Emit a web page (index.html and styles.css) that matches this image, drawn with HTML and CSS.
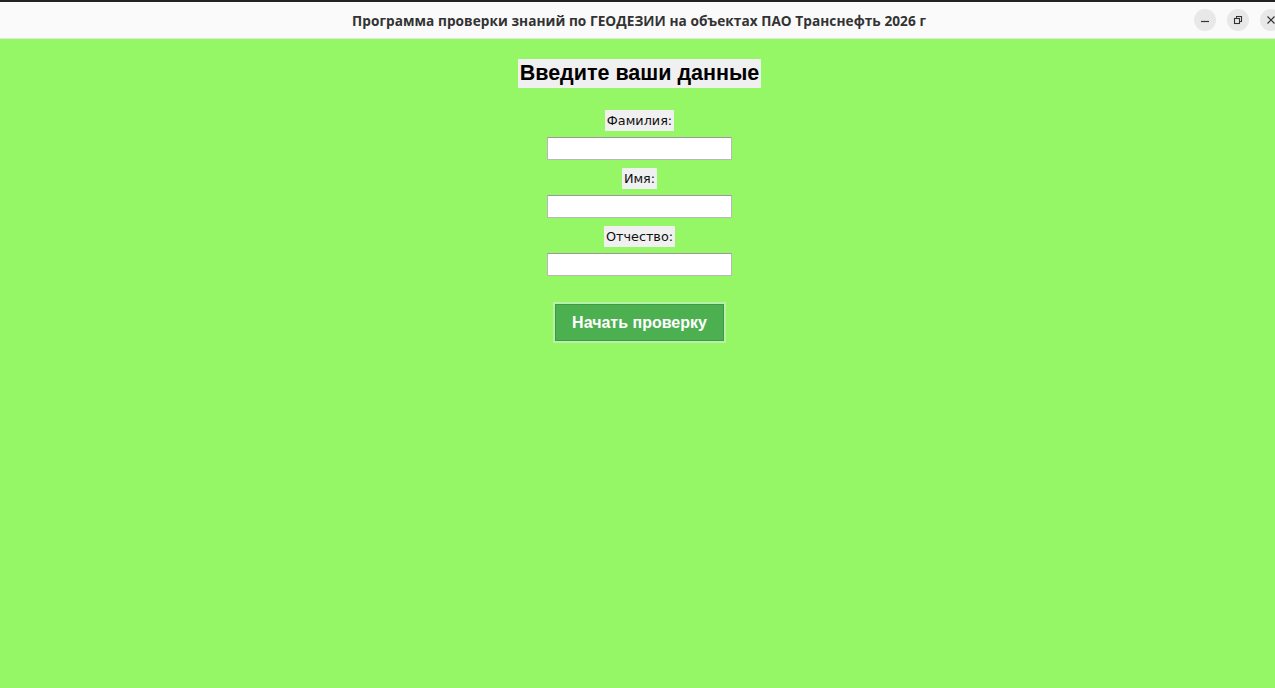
FILE: index.html
```html
<!DOCTYPE html>
<html lang="ru">
<head>
<meta charset="utf-8">
<title>Программа проверки знаний</title>
<link rel="stylesheet" href="styles.css">
</head>
<body>
<div class="window">
  <header class="titlebar">
    <div class="title">Программа проверки знаний по ГЕОДЕЗИИ на объектах ПАО Транснефть 2026 г</div>
    <div class="controls">
      <span class="ctl"><svg width="10" height="10" viewBox="0 0 10 10"><path d="M1 6.5h8" stroke="#333" stroke-width="1.2"/></svg></span>
      <span class="ctl"><svg width="10" height="10" viewBox="0 0 10 10"><rect x="1.5" y="3.5" width="5" height="5" fill="none" stroke="#333" stroke-width="1.1"/><path d="M3.5 3.5V1.5h5v5h-2" fill="none" stroke="#333" stroke-width="1.1"/></svg></span>
      <span class="ctl"><svg width="10" height="10" viewBox="0 0 10 10"><path d="M1.5 1.5l7 7M8.5 1.5l-7 7" stroke="#333" stroke-width="1.2"/></svg></span>
    </div>
  </header>
  <main class="content">
    <h1 class="heading">Введите ваши данные</h1>
    <div class="form">
      <label class="lbl">Фамилия:</label>
      <input class="entry" type="text">
      <label class="lbl">Имя:</label>
      <input class="entry" type="text">
      <label class="lbl">Отчество:</label>
      <input class="entry" type="text">
    </div>
    <div class="btn-wrap"><button class="btn">Начать проверку</button></div>
  </main>
</div>
</body>
</html>
```
FILE: styles.css
```css
html, body {
  margin: 0;
  padding: 0;
  height: 100%;
}
body {
  background: #95f766;
  font-family: "DejaVu Sans", sans-serif;
}
.window {
  display: flex;
  flex-direction: column;
  height: 100%;
  border-top: 2px solid #222;
  box-sizing: border-box;
}
.titlebar {
  height: 36px;
  background: #fafafa;
  border-bottom: 1px solid #e2e2e2;
  display: flex;
  align-items: center;
  justify-content: center;
  padding-left: 3px;
  position: relative;
  flex: none;
}
.title {
  font-family: "Open Sans", "Noto Sans", sans-serif;
  font-weight: 700;
  font-size: 13.65px;
  color: #333;
  letter-spacing: 0.05px;
}
.controls {
  position: absolute;
  right: -7px;
  top: 7px;
  display: flex;
  gap: 11px;
}
.ctl {
  width: 22px;
  height: 22px;
  border-radius: 50%;
  background: #e8e8e8;
  display: flex;
  align-items: center;
  justify-content: center;
}
.content {
  flex: 1;
  display: flex;
  flex-direction: column;
  align-items: center;
  padding-top: 20px;
  padding-left: 4px;
}
.heading {
  margin: 0;
  background: #f0f0f0;
  font-family: "Liberation Sans", Arial, sans-serif;
  font-weight: 700;
  font-size: 21.5px;
  line-height: 29px;
  padding: 0 2px;
  color: #000;
}
.form {
  display: flex;
  flex-direction: column;
  align-items: center;
  margin-top: 22px;
}
.lbl {
  background: #f0f0f0;
  font-size: 12.8px;
  line-height: 21px;
  padding: 0 2px;
  color: #111;
}
.entry {
  width: 185px;
  height: 23px;
  box-sizing: border-box;
  margin: 6px 0 8px;
  border: 1px solid #b8b8b8;
  border-top-color: #9a9a9a;
  background: #fff;
  padding: 0;
  outline: none;
}
.entry:last-child {
  margin-bottom: 0;
}
.btn-wrap {
  margin-top: 26px;
  border: 2px solid #b9f0a8;
  background: #b9f0a8;
  display: flex;
}
.btn {
  width: 169px;
  height: 37px;
  background: #4caf50;
  border: 1px solid #3f9a43;
  color: #fff;
  font-family: "Liberation Sans", Arial, sans-serif;
  font-weight: 700;
  font-size: 16px;
  padding: 0;
  cursor: pointer;
}
```
